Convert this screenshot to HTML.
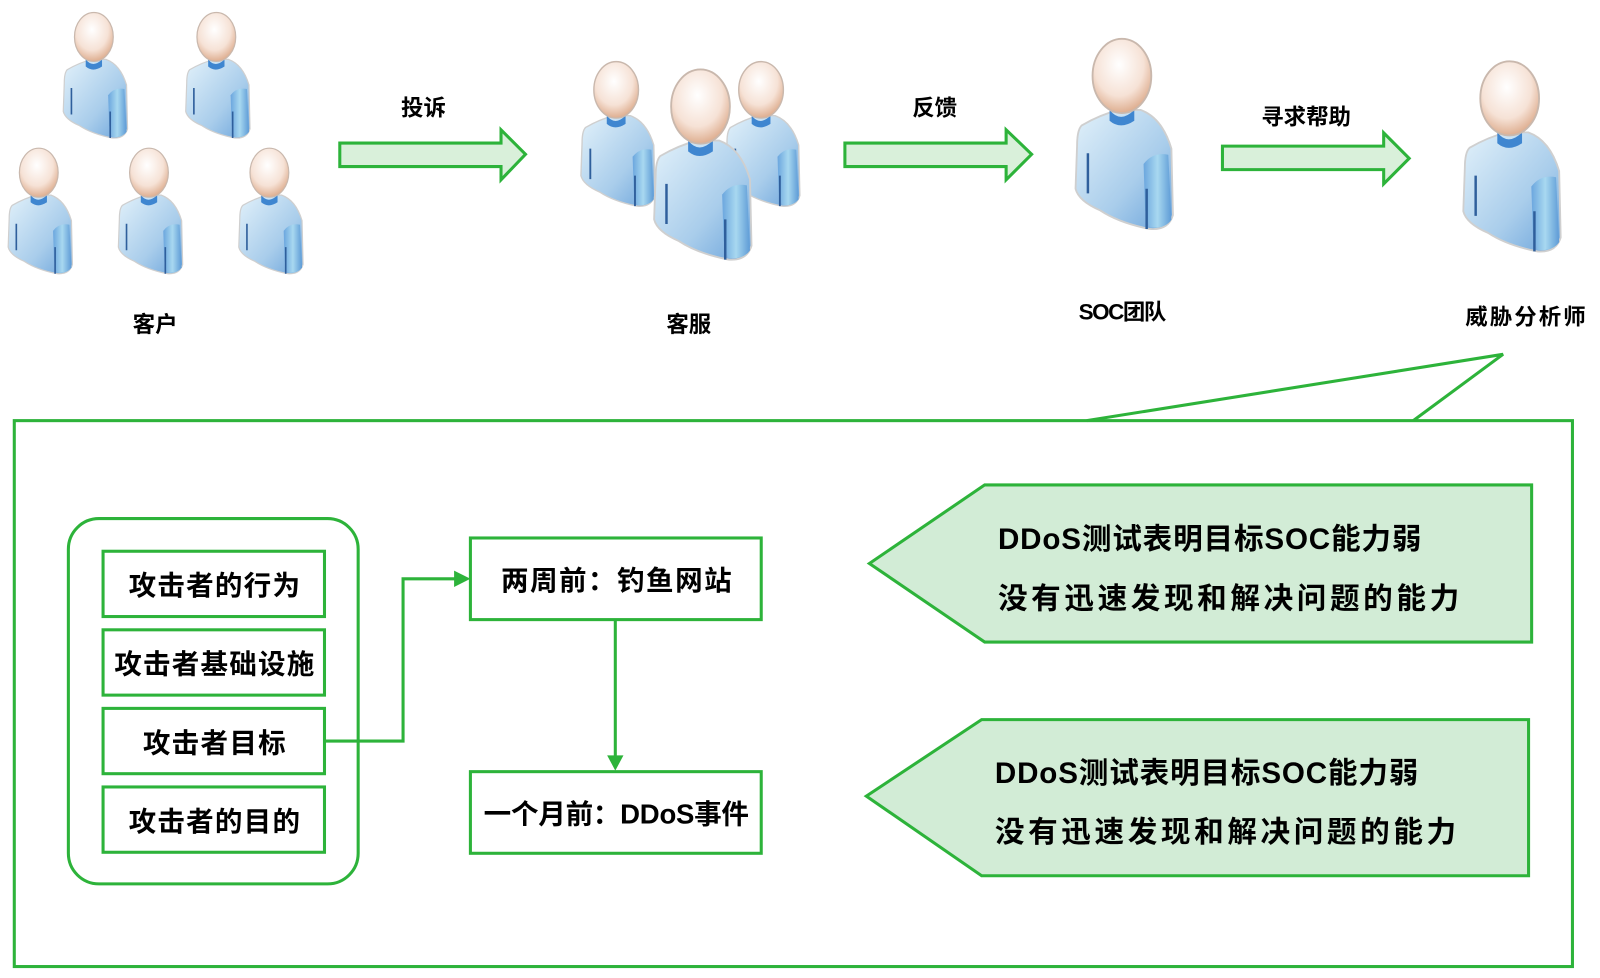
<!DOCTYPE html>
<html><head><meta charset="utf-8"><style>
html,body{margin:0;padding:0;background:#fff;}
svg{display:block;}
text{font-family:"Liberation Sans","Noto Sans CJK SC",sans-serif;font-weight:bold;fill:#000;}
</style></head><body>
<svg width="1600" height="978" viewBox="0 0 1568 958" xmlns="http://www.w3.org/2000/svg">
<defs>
<radialGradient id="hd" cx="0.45" cy="0.35" r="0.7">
<stop offset="0" stop-color="#fff"/><stop offset="0.6" stop-color="#f6e2d6"/><stop offset="1" stop-color="#d9a381"/></radialGradient>
<linearGradient id="bd" x1="0" y1="0" x2="1" y2="1">
<stop offset="0" stop-color="#e2f1fa"/><stop offset="0.6" stop-color="#a9cdeb"/><stop offset="1" stop-color="#6aa3db"/></linearGradient>
<linearGradient id="arm" x1="0" y1="0" x2="1" y2="0">
<stop offset="0" stop-color="#6ba6de"/><stop offset="0.5" stop-color="#a8d8f0"/><stop offset="1" stop-color="#5e9bd6"/></linearGradient>
<symbol id="p" viewBox="0 0 66 125">
<path d="M6,57 Q18,50 30,47 L44,47 Q58,52 64,72 L65,115 Q62,125 50,124 Q30,120 18,112 Q4,106 2,98 L3,70 Q3,60 6,57Z" fill="url(#bd)" stroke="#cfcfcf" stroke-width="1.2"/>
<path d="M46,82 Q52,74 62,76 L64,118 Q60,124 50,123 L47,112Z" fill="url(#arm)"/>
<path d="M24,47 Q31,56 40,47 L40,54 Q31,60 24,54Z" fill="#3f86d0"/>
<ellipse cx="32" cy="25" rx="19" ry="24" fill="url(#hd)" stroke="#c9b8ad" stroke-width="1.2"/>
<path d="M10,75 L10,101 M48,98 L48,124" stroke="#2f5f9c" stroke-width="1.6"/>
</symbol>
</defs>

<use href="#p" x="60" y="11" width="66" height="125"/>
<use href="#p" x="180" y="11" width="66" height="125"/>
<use href="#p" x="6" y="144" width="66" height="125"/>
<use href="#p" x="114" y="144" width="66" height="125"/>
<use href="#p" x="232" y="144" width="66" height="125"/>

<use href="#p" x="567" y="57" width="76" height="148"/>
<use href="#p" x="709" y="57" width="76" height="148"/>
<use href="#p" x="638" y="66" width="100" height="190"/>

<use href="#p" x="1051" y="36" width="100" height="190"/>
<use href="#p" x="1431" y="57" width="100" height="192"/>

<g fill="#d9f0da" stroke="#2db33a" stroke-width="3">
<polygon points="333,140 491,140 491,127 515,151 491,176 491,163 333,163"/>
<polygon points="828,140 986,140 986,127 1011,151 986,176 986,163 828,163"/>
<polygon points="1198,143 1356,143 1356,130 1381,155 1356,180 1356,166 1198,166"/>
</g>
<g font-size="22" text-anchor="middle">
<text x="415" y="113">投诉</text>
<text x="916" y="113">反馈</text>
<text x="1280" y="122">寻求帮助</text>
<text x="152" y="325">客户</text>
<text x="675" y="325">客服</text>
<text x="1100" y="313" textLength="86">SOC团队</text>
<text x="1495" y="318" textLength="118">威胁分析师</text>
</g>

<rect x="14" y="412" width="1527" height="535" fill="none" stroke="#2db33a" stroke-width="3"/>
<polyline points="1065,412 1473,347 1385,412" fill="none" stroke="#2db33a" stroke-width="3"/>

<rect x="67" y="508" width="284" height="358" rx="30" fill="none" stroke="#2db33a" stroke-width="3"/>
<g fill="#fff" stroke="#2db33a" stroke-width="3">
<rect x="101" y="540" width="217" height="64"/>
<rect x="101" y="617" width="217" height="64"/>
<rect x="101" y="694" width="217" height="64"/>
<rect x="101" y="771" width="217" height="64"/>
<rect x="461" y="527" width="285" height="80"/>
<rect x="461" y="756" width="285" height="80"/>
</g>
<g font-size="27" text-anchor="middle">
<text x="210" y="583" textLength="168">攻击者的行为</text>
<text x="210" y="660" textLength="196">攻击者基础设施</text>
<text x="210" y="737" textLength="140">攻击者目标</text>
<text x="210" y="814" textLength="168">攻击者的目的</text>
<text x="604" y="578" textLength="226">两周前：钓鱼网站</text>
<text x="604" y="807" textLength="260">一个月前：DDoS事件</text>
</g>
<polyline points="318,726 395,726 395,567 447,567" fill="none" stroke="#2db33a" stroke-width="3"/>
<polygon points="445,559 461,567 445,575" fill="#2db33a"/>
<line x1="603" y1="607" x2="603" y2="742" stroke="#2db33a" stroke-width="3"/>
<polygon points="595,740 603,755 611,740" fill="#2db33a"/>

<g fill="#d2ecd6" stroke="#2db33a" stroke-width="3">
<polygon points="852,552 965,475 1501,475 1501,629 965,629"/>
<polygon points="849,780 962,705 1498,705 1498,858 962,858"/>
</g>
<g font-size="29">
<text x="978" y="538" textLength="415">DDoS测试表明目标SOC能力弱</text>
<text x="978" y="596" textLength="452">没有迅速发现和解决问题的能力</text>
<text x="975" y="767" textLength="415">DDoS测试表明目标SOC能力弱</text>
<text x="975" y="825" textLength="452">没有迅速发现和解决问题的能力</text>
</g>
</svg>
</body></html>
